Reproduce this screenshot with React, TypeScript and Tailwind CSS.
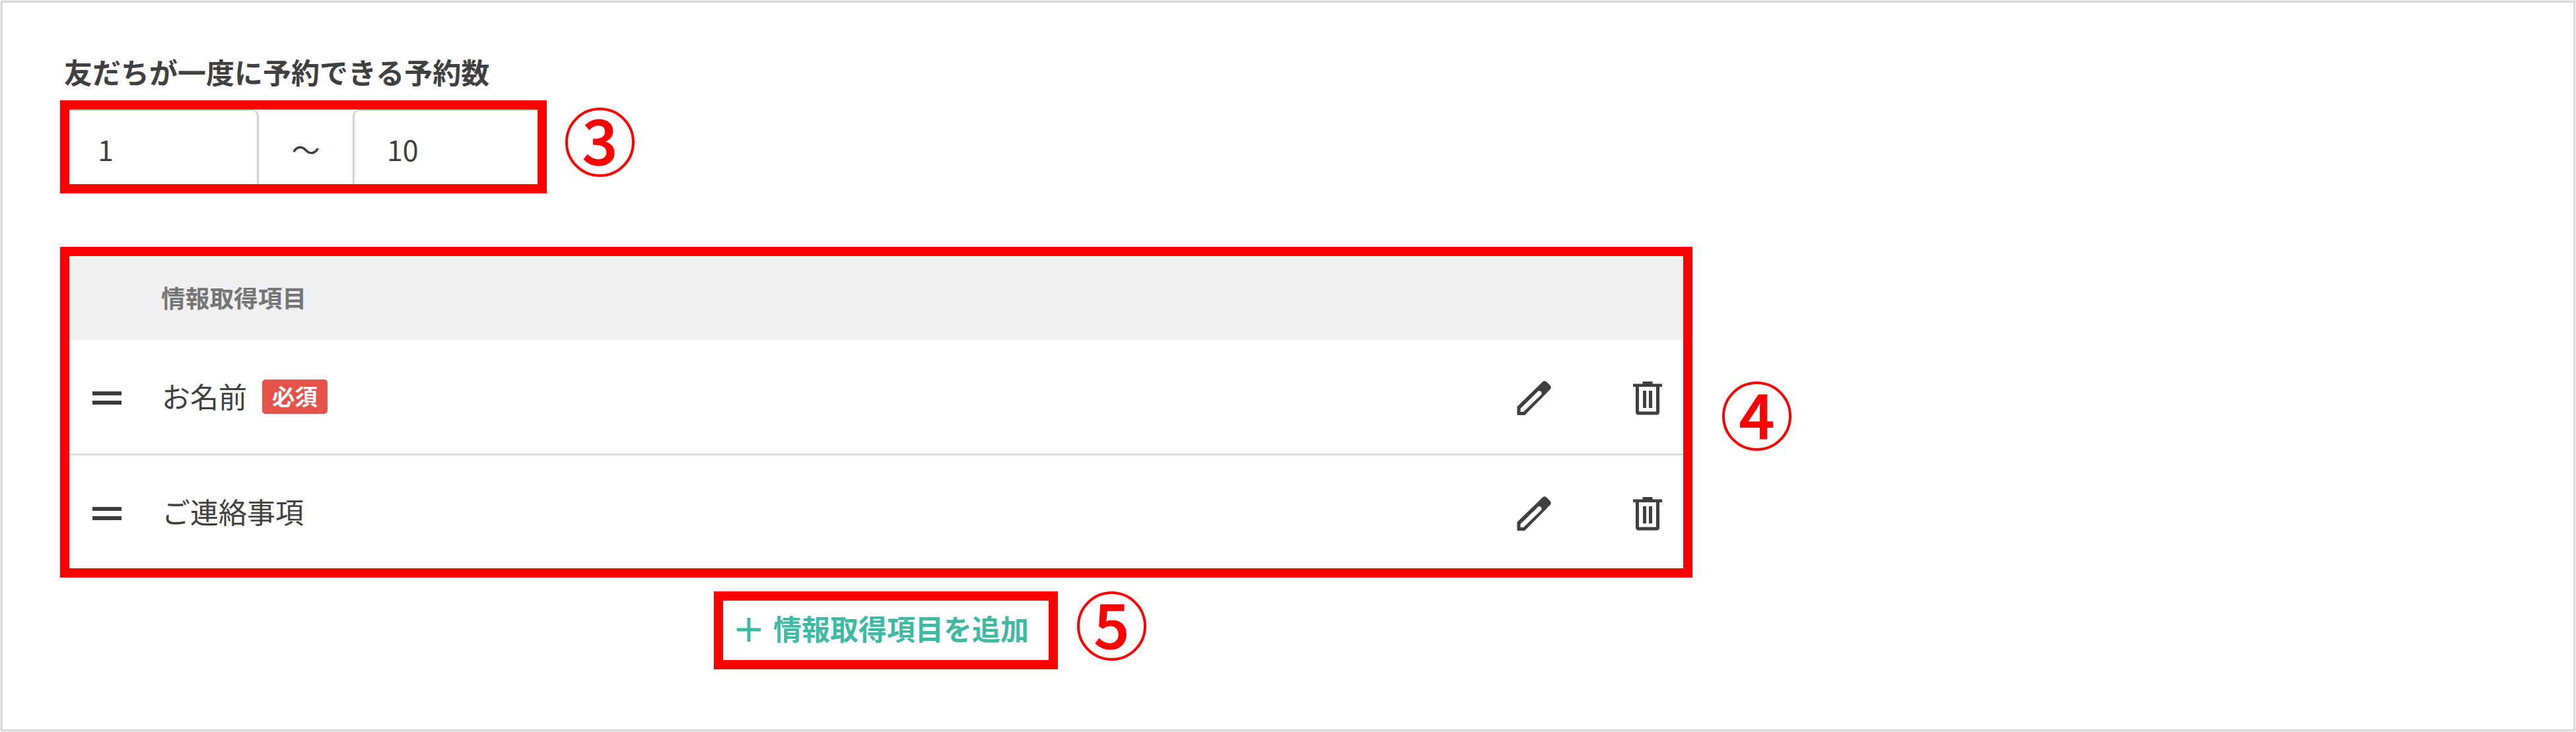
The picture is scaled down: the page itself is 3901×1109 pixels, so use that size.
import type { ReactNode } from 'react'

interface FieldItem {
  id: number
  label: string
  required: boolean
}

const ITEMS: FieldItem[] = [
  { id: 1, label: 'お名前', required: true },
  { id: 2, label: 'ご連絡事項', required: false },
]

function StepMark({ children, className }: { children: ReactNode; className: string }) {
  return (
    <span
      className={`flex size-[105px] shrink-0 items-center justify-center rounded-full border-4 border-[#ff0000] text-[94px] leading-none font-medium text-[#ff0000] [-webkit-text-stroke:1.200px_#ff0000] ${className}`}
    >
      <span className="-mt-[14px]">{children}</span>
    </span>
  )
}

function DragHandle() {
  return (
    <span className="flex w-[44px] flex-col gap-[8px]">
      <span className="h-[6px] bg-[#3c3c3c]" />
      <span className="h-[6px] bg-[#3c3c3c]" />
    </span>
  )
}

function PencilIcon() {
  return (
    <svg width="52" height="52" viewBox="0 0 52 52">
      <path
        fill="#3f3f3f"
        fillRule="evenodd"
        d="M0.500 39L39 1.500Q42 -1 45 1.500L50.500 7Q53 10 50.500 13L12 52H2Q0.500 52 0.500 50.500ZM5.500 42V47H10L37.500 20.500Q38 14.500 32.500 15.500Z"
      />
    </svg>
  )
}

function TrashIcon() {
  return (
    <svg width="44" height="52" viewBox="0 0 44 52">
      <path d="M0 4.500H14.500V1H29.500V4.500H44V9H0Z" fill="#3f3f3f" />
      <path d="M6.500 8V47Q6.500 49 8.500 49H35.500Q37.500 49 37.500 47V8" fill="none" stroke="#3f3f3f" strokeWidth="5" />
      <path d="M17.500 15V41M26.500 15V41" fill="none" stroke="#3f3f3f" strokeWidth="5" />
    </svg>
  )
}

function PlusIcon() {
  return (
    <svg width="36" height="36" viewBox="0 0 36 36">
      <path d="M18 0V36M0 18H36" stroke="#3fbaa2" strokeWidth="5" />
    </svg>
  )
}

function ItemRow({ item }: { item: FieldItem }) {
  return (
    <div className="flex h-[175px] items-center border-b-[3px] border-[#dcdcdc] pt-[4px] pl-[35px] last:h-[172px] last:border-b-0">
      <DragHandle />
      <span className="mb-[8px] ml-[61px] text-[43px] leading-[60px]">{item.label}</span>
      {item.required && (
        <span className="mb-[4px] ml-[23px] flex h-[52px] w-[99px] items-center justify-center rounded-[5px] bg-[#e65148] pb-[4px] text-[34.500px] leading-none font-bold text-white">
          必須
        </span>
      )}
      <div className="mr-[32px] ml-auto flex gap-[124px]">
        <PencilIcon />
        <TrashIcon />
      </div>
    </div>
  )
}

export default function App() {
  return (
    <div className="h-[1109px] w-[3901px] bg-[#f6f6f6] p-px font-['Noto_Sans_CJK_JP',sans-serif] text-[#404040]">
      <main className="flex h-full flex-col items-start border-[3px] border-[#d9d9d9] bg-white pt-[74px] pl-[87px]">
        <h2 className="ml-[6px] text-[43px] leading-[60px] font-bold">友だちが一度に予約できる予約数</h2>

        <div className="mt-[14px] flex">
          <div className="flex h-[141px] w-[737px] border-[14px] border-[#ff0000] text-[43px]">
            <div className="flex w-[287px] items-center rounded-tr-[10px] border-t-[2px] border-r-[3px] border-[#cfcfcf] pt-[3px] pl-[43px]">1</div>
            <div className="flex w-[142px] items-center justify-center pt-[5px]">～</div>
            <div className="flex flex-1 items-center rounded-tl-[10px] border-t-[2px] border-l-[3px] border-[#cfcfcf] pt-[3px] pl-[49px]">10</div>
          </div>
          <StepMark className="mt-[11px] ml-[28px]">3</StepMark>
        </div>

        <div className="mt-[81px] flex">
          <section className="h-[501px] w-[2472px] border-[14px] border-[#ff0000]">
            <div className="flex h-[127px] items-center bg-[#f0f0f2] pb-[2px] pl-[139px] text-[36.700px] font-bold text-[#757575]">
              情報取得項目
            </div>
            {ITEMS.map((item) => (
              <ItemRow key={item.id} item={item} />
            ))}
          </section>
          <StepMark className="mt-[204px] ml-[45px]">4</StepMark>
        </div>

        <div className="mt-[21px] ml-[990px] flex">
          <button className="flex h-[118px] w-[521px] items-center border-[14px] border-[#ff0000] pb-[3px] pl-[21px] text-[43px] font-bold text-[#3fbaa2]">
            <PlusIcon />
            <span className="mb-[5px] ml-[19px]">情報取得項目を追加</span>
          </button>
          <StepMark className="ml-[29px]">5</StepMark>
        </div>
      </main>
    </div>
  )
}
